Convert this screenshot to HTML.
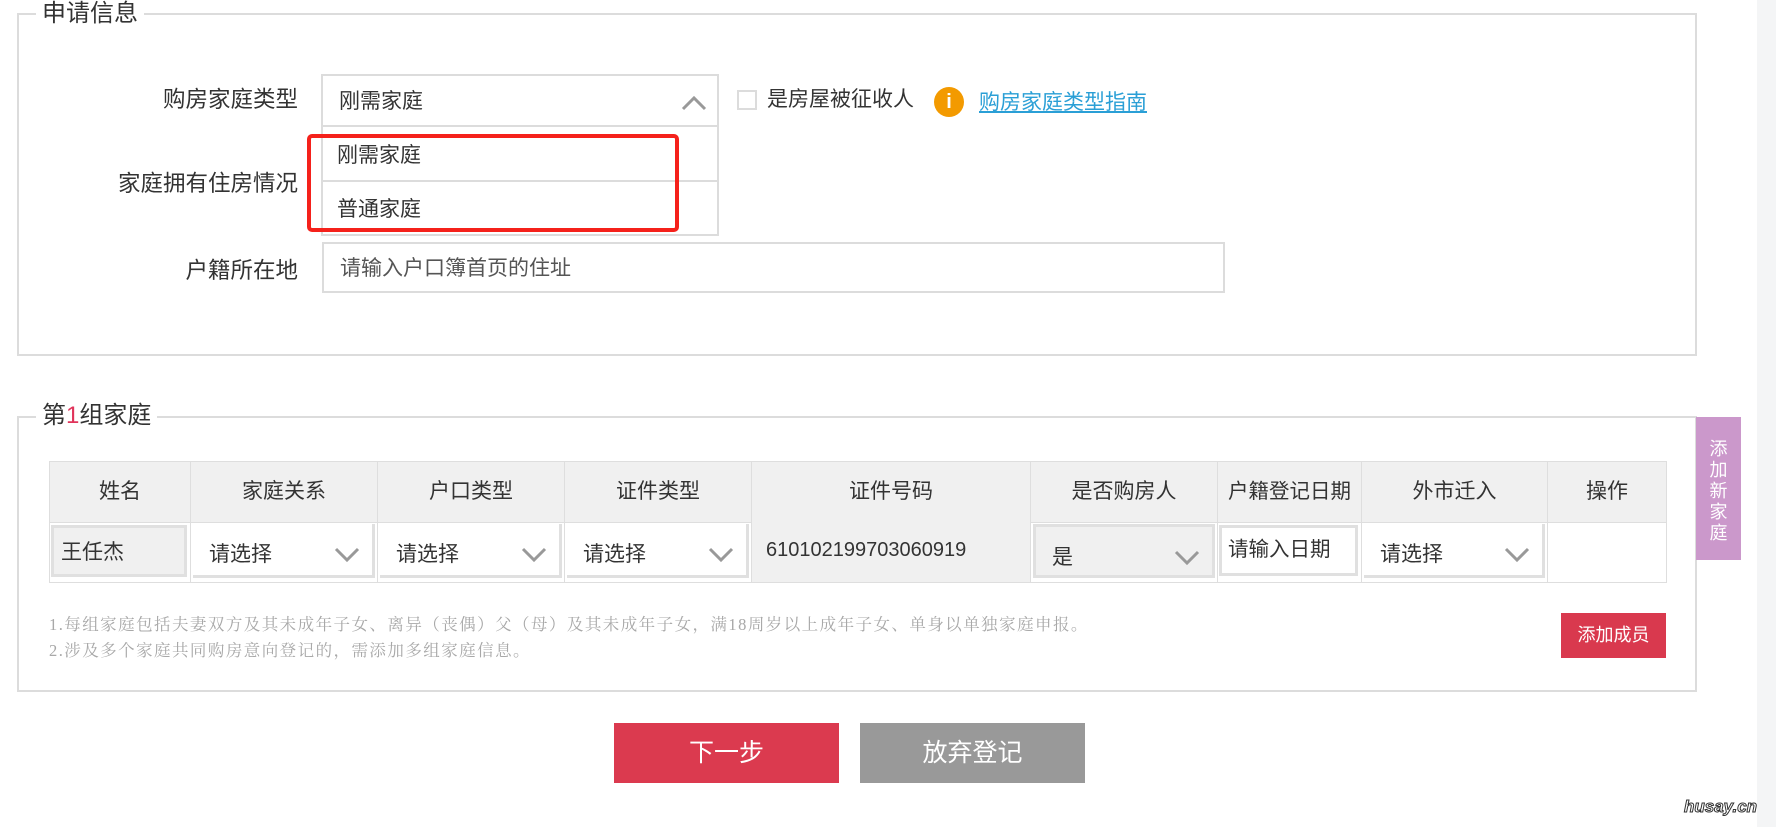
<!DOCTYPE html>
<html><head><meta charset="utf-8"><style>
*{margin:0;padding:0;box-sizing:border-box}
body{width:1776px;height:827px;background:#fff;position:relative;overflow:hidden;font-family:"Liberation Sans","Noto Sans CJK SC",sans-serif;color:#333}
.a{position:absolute}
.fs{position:absolute;border:2px solid #dcdcdc}
.lg{position:absolute;background:#fff;padding:0 6px;font-size:24px;color:#333;line-height:28px}
.lbl{position:absolute;font-size:22.5px;text-align:right;width:260px;line-height:28px}
.th{position:absolute;top:462px;height:60px;background:#f0f0f0;border-right:1px solid #dedede;font-size:21px;line-height:60px;text-align:center}
.td{position:absolute;top:522px;height:60px;border-right:1px solid #dedede;font-size:21px}
.sel{position:absolute;left:2px;top:2px;right:2px;bottom:4px;background:#fff;border:3px solid #e0e0e0;border-top:none;border-left:none;line-height:62px;padding-left:16px}
.chev{position:absolute;right:12px;top:23px}
</style></head><body>
<div class="a" style="left:1757px;top:0;width:19px;height:827px;background:#f4f5f6"></div>

<div class="fs" style="left:17px;top:13px;width:1680px;height:343px"></div>
<div class="lg" style="left:36px;top:0px">申请信息</div>

<div class="lbl" style="left:38px;top:86px">购房家庭类型</div>
<div class="lbl" style="left:38px;top:170px">家庭拥有住房情况</div>
<div class="lbl" style="left:38px;top:257px">户籍所在地</div>

<div class="a" style="left:321px;top:74px;width:398px;height:53px;border:2px solid #dcdcdc;font-size:21px;line-height:52px;padding-left:16px">刚需家庭
<svg class="a" style="right:10px;top:19px" width="26" height="16"><path d="M2 14 L13 3 L24 14" fill="none" stroke="#999" stroke-width="3"/></svg></div>
<div class="a" style="left:321px;top:126px;width:398px;height:110px;border:2px solid #dcdcdc;border-top:none"></div>
<div class="a" style="left:321px;top:180px;width:398px;height:2px;background:#dcdcdc"></div>
<div class="a" style="left:337px;top:142px;font-size:21px;line-height:28px">刚需家庭</div>
<div class="a" style="left:337px;top:196px;font-size:21px;line-height:28px">普通家庭</div>
<div class="a" style="left:307px;top:134px;width:372px;height:98px;border:4px solid #f5211b;border-radius:5px"></div>

<div class="a" style="left:737px;top:90px;width:20px;height:20px;border:2px solid #dcdcdc"></div>
<div class="a" style="left:767px;top:86px;font-size:21px;line-height:28px">是房屋被征收人</div>
<div class="a" style="left:934px;top:87px;width:30px;height:30px;border-radius:50%;background:#f39a00;color:#fff;font-weight:bold;font-size:20px;line-height:30px;text-align:center">i</div>
<div class="a" style="left:979px;top:89px;font-size:21px;line-height:28px;color:#2a9fd6;text-decoration:underline">购房家庭类型指南</div>

<div class="a" style="left:322px;top:242px;width:903px;height:51px;border:2px solid #dcdcdc;font-size:21px;line-height:49px;padding-left:16px;color:#555">请输入户口簿首页的住址</div>

<div class="fs" style="left:17px;top:416px;width:1680px;height:276px"></div>
<div class="lg" style="left:36px;top:402px">第<span style="color:#e0335a">1</span>组家庭</div>
<div class="a" style="left:1696px;top:417px;width:45px;height:143px;background:#cb98cb;color:#fff;font-size:18px;line-height:21px;text-align:center;padding-top:22px">添<br>加<br>新<br>家<br>庭</div>

<div class="a" style="left:49px;top:461px;width:1618px;height:122px;border:1px solid #dedede"></div>
<div class="th" style="left:50px;width:141px">姓名</div>
<div class="th" style="left:191px;width:187px">家庭关系</div>
<div class="th" style="left:378px;width:187px">户口类型</div>
<div class="th" style="left:565px;width:187px">证件类型</div>
<div class="th" style="left:752px;width:279px">证件号码</div>
<div class="th" style="left:1031px;width:187px">是否购房人</div>
<div class="th" style="left:1218px;width:144px;font-size:20.5px">户籍登记日期</div>
<div class="th" style="left:1362px;width:186px">外市迁入</div>
<div class="th" style="left:1548px;width:118px;border-right:none">操作</div>
<div class="a" style="left:50px;top:522px;width:1616px;height:1px;background:#dedede"></div>

<div class="td" style="left:50px;width:141px"><div class="a" style="left:1px;top:3px;right:3px;bottom:5px;background:#f0f0f0;border:3px solid #e0e0e0;line-height:50px;padding-left:7px">王任杰</div></div>
<div class="td" style="left:191px;width:187px"><div class="sel">请选择<svg class="chev" width="26" height="16"><path d="M2 2 L13 13 L24 2" fill="none" stroke="#999" stroke-width="3"/></svg></div></div>
<div class="td" style="left:378px;width:187px"><div class="sel">请选择<svg class="chev" width="26" height="16"><path d="M2 2 L13 13 L24 2" fill="none" stroke="#999" stroke-width="3"/></svg></div></div>
<div class="td" style="left:565px;width:187px"><div class="sel">请选择<svg class="chev" width="26" height="16"><path d="M2 2 L13 13 L24 2" fill="none" stroke="#999" stroke-width="3"/></svg></div></div>
<div class="td" style="left:752px;width:279px;background:#f0f0f0;line-height:56px;padding-left:14px;font-size:20px">610102199703060919</div>
<div class="td" style="left:1031px;width:187px"><div class="sel" style="background:#f0f0f0;border:3px solid #e0e0e0">是<svg class="chev" width="26" height="16"><path d="M2 2 L13 13 L24 2" fill="none" stroke="#999" stroke-width="3"/></svg></div></div>
<div class="td" style="left:1218px;width:144px"><div class="a" style="left:1px;top:3px;right:3px;bottom:6px;background:#fff;border:3px solid #e0e0e0;line-height:44px;padding-left:6px;font-size:20.5px">请输入日期</div></div>
<div class="td" style="left:1362px;width:186px"><div class="sel">请选择<svg class="chev" width="26" height="16"><path d="M2 2 L13 13 L24 2" fill="none" stroke="#999" stroke-width="3"/></svg></div></div>

<div class="a" style="left:49px;top:612px;font-family:'Liberation Serif','Noto Serif CJK SC',serif;font-size:16.5px;line-height:26px;color:#a8a8a8;letter-spacing:1.45px">1.每组家庭包括夫妻双方及其未成年子女、离异（丧偶）父（母）及其未成年子女，满18周岁以上成年子女、单身以单独家庭申报。<br>2.涉及多个家庭共同购房意向登记的，需添加多组家庭信息。</div>
<div class="a" style="left:1561px;top:613px;width:105px;height:45px;background:#d9394e;color:#fff;font-size:18px;line-height:45px;text-align:center">添加成员</div>

<div class="a" style="left:614px;top:723px;width:225px;height:60px;background:#db3a4f;color:#fff;font-size:25px;line-height:60px;text-align:center">下一步</div>
<div class="a" style="left:860px;top:723px;width:225px;height:60px;background:#999;color:#fff;font-size:25px;line-height:60px;text-align:center">放弃登记</div>

<div class="a" style="left:1684px;top:797px;font-size:17px;font-weight:bold;font-style:italic;color:#fff;-webkit-text-stroke:1px #333">husay.cn</div>
</body></html>
